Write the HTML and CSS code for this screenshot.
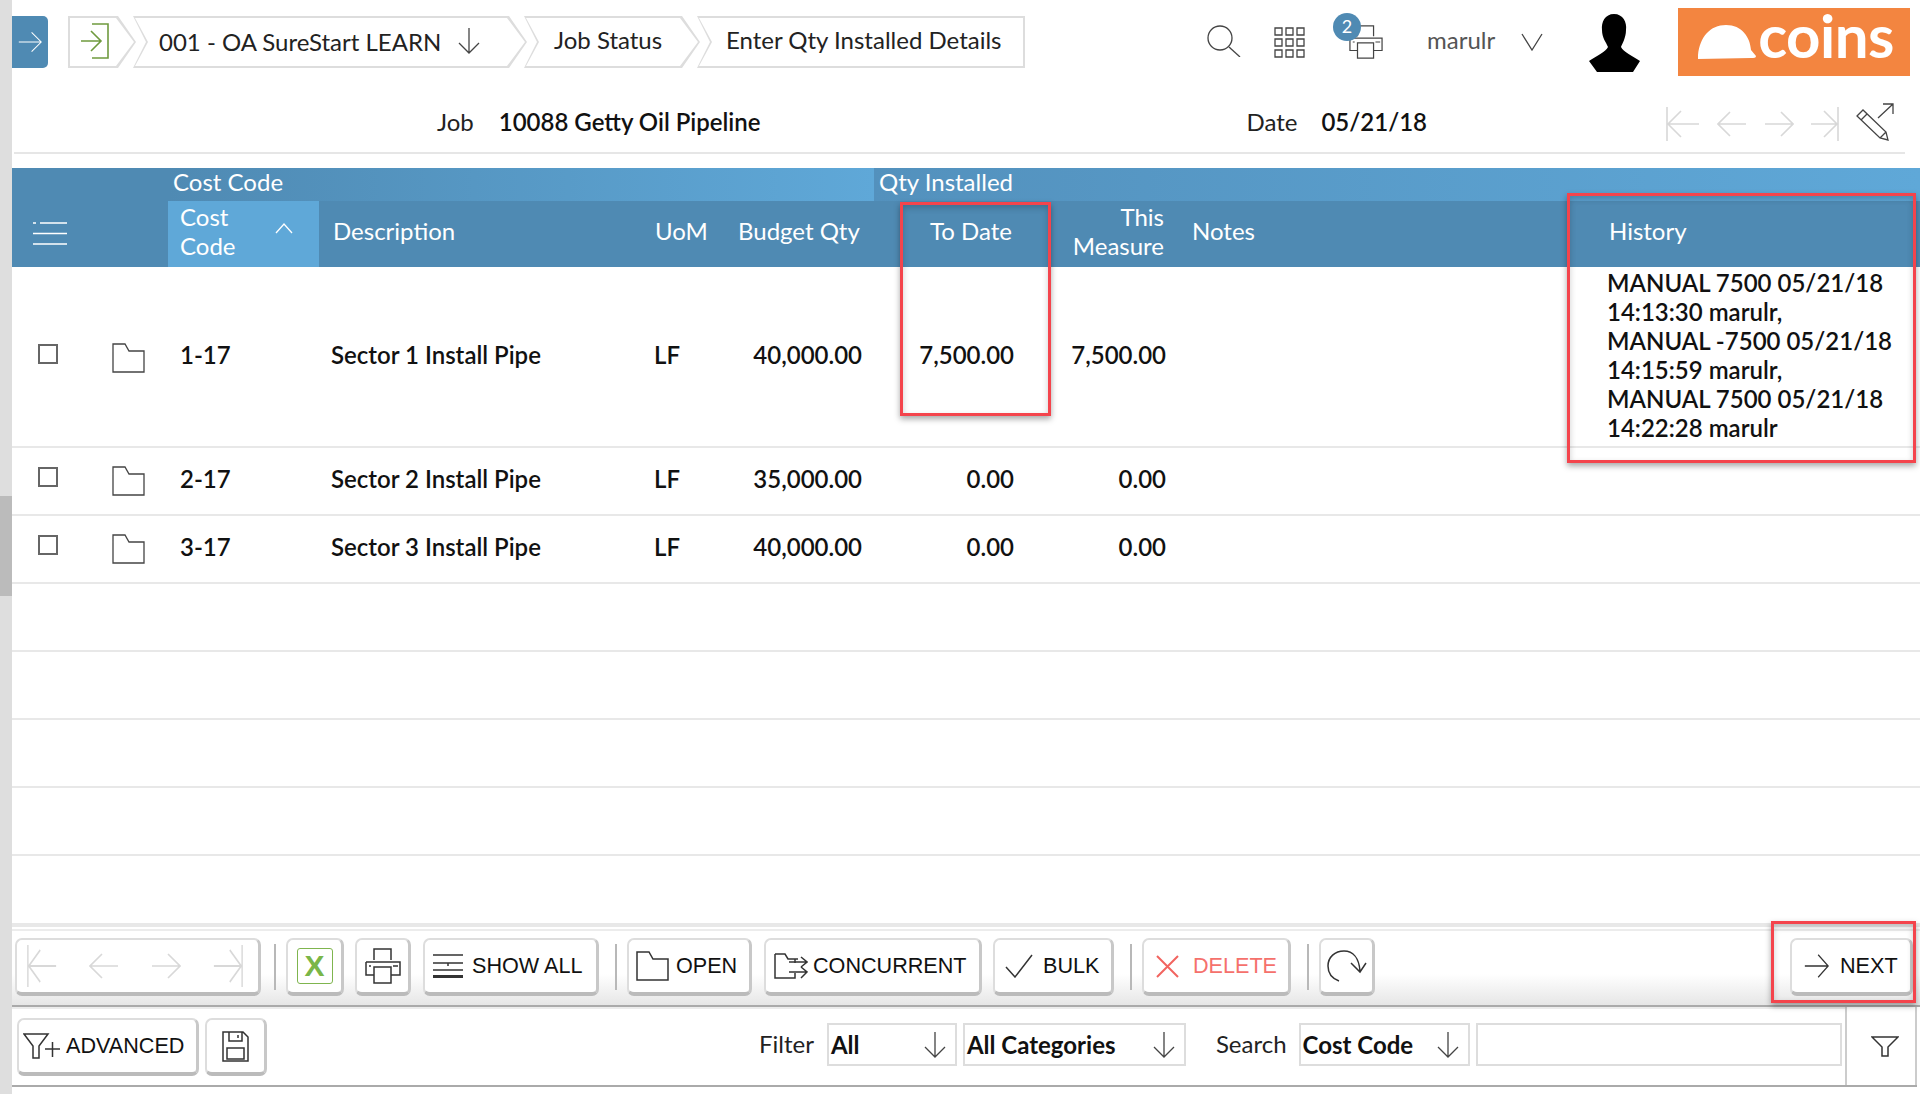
FILE: index.html
```html
<!DOCTYPE html>
<html lang="en">
  <head>
    <meta charset="UTF-8" />
    <title>Enter Qty Installed Details</title>
    <link rel="stylesheet" href="styles.css">
  </head>
  <body>
    <svg class="sprite" xmlns="http://www.w3.org/2000/svg">
      <symbol id="arrow-right" viewBox="0 0 30 30"><path d="M1 15H29M17 3L29 15L17 27" /></symbol>
      <symbol id="arrow-left" viewBox="0 0 30 30"><path d="M29 15H1M13 3L1 15L13 27" /></symbol>
      <symbol id="arrow-first" viewBox="0 0 34 34"><path d="M1 0V34M33 17H2M15 4L2 17L15 30" /></symbol>
      <symbol id="arrow-last" viewBox="0 0 34 34"><path d="M33 0V34M1 17H32M19 4L32 17L19 30" /></symbol>
      <symbol id="arrow-down" viewBox="0 0 24 26"><path d="M12 0V25M2 15L12 25L22 15" /></symbol>
      <symbol id="folder" viewBox="0 0 33 30"><path d="M1 1H13L17 8H32V29H1Z" /></symbol>
      <symbol id="printer" viewBox="0 0 36 36"><path d="M9 12V1H26V12M1 14H35V27H26M9 27H1V14M9 19H26V35H9Z" /><path d="M4 18H6M28 18H33" /></symbol>
    </svg>

    <div class="page">
      <div class="scrollbar"><div class="scroll-thumb"></div></div>

      <div class="main">
        <header class="topbar">
          <button class="nav-toggle" type="button">
            <svg class="icon white" width="24" height="30"><use href="#arrow-right" /></svg>
          </button>
          <nav class="crumbs">
            <div class="crumb crumb-home">
              <svg class="icon green" width="30" height="36" viewBox="0 0 30 36"><path d="M1 18H20M11 8L21 18L11 28M12 1H28V35H12" /></svg>
            </div>
            <div class="crumb crumb-company">
              <span class="crumb-low">001 - OA SureStart LEARN</span>
              <svg class="icon" width="24" height="26"><use href="#arrow-down" /></svg>
            </div>
            <div class="crumb crumb-status">Job Status</div>
            <div class="crumb crumb-last">Enter Qty Installed Details</div>
          </nav>

          <div class="top-tools">
            <svg class="icon tool-search" width="34" height="32" viewBox="0 0 34 32"><ellipse cx="13" cy="13" rx="12" ry="12" /><path d="M22 22L33 32" /></svg>
            <svg class="icon tool-grid" width="31" height="31" viewBox="0 0 31 31">
              <path d="M1 1h7v7h-7zM12 1h7v7h-7zM23 1h7v7h-7zM1 12h7v7h-7zM12 12h7v7h-7zM23 12h7v7h-7zM1 23h7v7h-7zM12 23h7v7h-7zM23 23h7v7h-7z" />
            </svg>
            <div class="tool-print">
              <svg class="icon" width="34" height="34"><use href="#printer" /></svg>
              <span class="badge">2</span>
            </div>
            <span class="username">marulr</span>
            <svg class="icon tool-caret" width="22" height="18" viewBox="0 0 22 18"><path d="M1 1L11 17L21 1" /></svg>
            <svg class="avatar" width="51" height="58" viewBox="0 0 51 58"><path d="M25 0C34 0 38 8 37 16C37 24 33 30 32 33C34 38 44 42 51 47L44 58H8L0 47C7 42 17 38 19 33C17 28 13 24 13 16C12 8 16 0 25 0Z" /></svg>
            <div class="logo">
              <svg width="60" height="34" viewBox="0 0 60 34"><path d="M2 30C4 12 14 0 30 0C46 0 54 12 55 25L60 31C60 33 58 33 55 33L2 34Z" fill="#fff" /></svg>
              <span class="logo-text">coins</span>
            </div>
          </div>
        </header>

        <section class="job-bar">
          <span class="job-label">Job</span>
          <strong class="job-value">10088 Getty Oil Pipeline</strong>
          <span class="date-label">Date</span>
          <strong class="date-value">05/21/18</strong>
          <div class="record-nav">
            <svg class="icon faint" width="34" height="34"><use href="#arrow-first" /></svg>
            <svg class="icon faint" width="30" height="30"><use href="#arrow-left" /></svg>
            <svg class="icon faint" width="30" height="30"><use href="#arrow-right" /></svg>
            <svg class="icon faint" width="28" height="34" viewBox="6 0 28 34"><use href="#arrow-last" width="34" height="34" /></svg>
            <svg class="icon edit-icon" width="38" height="38" viewBox="0 0 38 38"><path d="M1 13L7 7L30 29L32 37L24 35ZM5 17L11 11M24 35L30 29M22 15L37 1M27 1H37V11" /></svg>
          </div>
        </section>

        <div class="grid-wrap">
          <div class="band">
            <div class="band-code">Cost Code</div>
            <div class="band-qty">Qty Installed</div>
          </div>
          <div class="row head-row">
            <div class="cell">
              <svg class="icon white" width="34" height="24" viewBox="0 0 34 24"><path d="M0 1H3M7 1H34M0 11.500H34M0 22H34" /></svg>
            </div>
            <div class="cell head-code">
              <span>Cost<br />Code</span>
              <svg class="icon white sort-caret" width="18" height="11" viewBox="0 0 18 11"><path d="M1 10L9 1L17 10" /></svg>
            </div>
            <div class="cell col-desc">Description</div>
            <div class="cell col-uom">UoM</div>
            <div class="cell head-budget">Budget Qty</div>
            <div class="cell head-todate">To Date</div>
            <div class="cell head-measure">This<br />Measure</div>
            <div class="cell head-notes">Notes</div>
            <div class="cell head-history">History</div>
          </div>

          <div class="row data-row row-tall">
            <div class="cell cell-select">
              <input class="check" type="checkbox" />
              <svg class="icon folder-icon" width="33" height="30"><use href="#folder" /></svg>
            </div>
            <div class="cell col-code">1-17</div>
            <div class="cell col-desc">Sector 1 Install Pipe</div>
            <div class="cell col-uom">LF</div>
            <div class="cell num num-budget">40,000.00</div>
            <div class="cell num num-todate">7,500.00</div>
            <div class="cell num num-measure">7,500.00</div>
            <div class="cell"></div>
            <div class="cell col-history">
              MANUAL 7500 05/21/18<br />14:13:30 marulr,<br />
              MANUAL -7500 05/21/18<br />14:15:59 marulr,<br />
              MANUAL 7500 05/21/18<br />14:22:28 marulr
            </div>
          </div>
          <div class="row data-row">
            <div class="cell cell-select">
              <input class="check" type="checkbox" />
              <svg class="icon folder-icon" width="33" height="30"><use href="#folder" /></svg>
            </div>
            <div class="cell col-code">2-17</div>
            <div class="cell col-desc">Sector 2 Install Pipe</div>
            <div class="cell col-uom">LF</div>
            <div class="cell num num-budget">35,000.00</div>
            <div class="cell num num-todate">0.00</div>
            <div class="cell num num-measure">0.00</div>
            <div class="cell"></div>
            <div class="cell"></div>
          </div>
          <div class="row data-row">
            <div class="cell cell-select">
              <input class="check" type="checkbox" />
              <svg class="icon folder-icon" width="33" height="30"><use href="#folder" /></svg>
            </div>
            <div class="cell col-code">3-17</div>
            <div class="cell col-desc">Sector 3 Install Pipe</div>
            <div class="cell col-uom">LF</div>
            <div class="cell num num-budget">40,000.00</div>
            <div class="cell num num-todate">0.00</div>
            <div class="cell num num-measure">0.00</div>
            <div class="cell"></div>
            <div class="cell"></div>
          </div>
          <div class="empty-row"></div>
          <div class="empty-row"></div>
          <div class="empty-row"></div>
          <div class="empty-row"></div>
        </div>

        <footer class="footer">
          <div class="toolbar">
            <div class="btn btn-nav">
              <svg class="icon faint" width="30" height="42" viewBox="0 0 34 34" preserveAspectRatio="none"><use href="#arrow-first" /></svg>
              <svg class="icon faint" width="30" height="34"><use href="#arrow-left" /></svg>
              <svg class="icon faint" width="30" height="34"><use href="#arrow-right" /></svg>
              <svg class="icon faint" width="30" height="42" viewBox="0 0 34 34" preserveAspectRatio="none"><use href="#arrow-last" /></svg>
            </div>
            <span class="divider"></span>
            <div class="btn btn-excel">
              <span class="excel-box">X</span>
            </div>
            <div class="btn btn-print">
              <svg class="icon dark" width="36" height="36"><use href="#printer" /></svg>
            </div>
            <div class="btn btn-showall">
              <svg class="icon dark" width="30" height="24" viewBox="0 0 30 24"><path d="M0 1H30M0 9H30M15 9V12M0 16H30" /><path class="thick" d="M0 22.500H30" /></svg>
              SHOW ALL
            </div>
            <span class="divider"></span>
            <div class="btn btn-open">
              <svg class="icon dark" width="33" height="30"><use href="#folder" /></svg>
              OPEN
            </div>
            <div class="btn btn-concurrent">
              <svg class="icon dark" width="34" height="26" viewBox="0 0 34 26"><path d="M1 1H11L14 6H24M1 1V25H21V20M21 6V10M15 9H32M27 4L33 9L27 14M15 19H32M27 14L33 19L27 25" /></svg>
              CONCURRENT
            </div>
            <div class="btn btn-bulk">
              <svg class="icon dark" width="28" height="24" viewBox="0 0 28 24"><path d="M1 13L10 23L27 1" /></svg>
              BULK
            </div>
            <span class="divider"></span>
            <div class="btn btn-delete">
              <svg class="icon red" width="23" height="23" viewBox="0 0 23 23"><path d="M1 1L22 22M22 1L1 22" /></svg>
              DELETE
            </div>
            <span class="divider"></span>
            <div class="btn btn-refresh">
              <svg class="icon dark" width="40" height="32" viewBox="0 0 40 32"><path d="M12 31C4 28 1 22 1 16C1 7 8 1 17 1C26 1 32 8 33 21M24 13L33 22L39 13" /></svg>
            </div>
            <div class="btn btn-next">
              <svg class="icon dark" width="25" height="28" viewBox="0 0 30 30" preserveAspectRatio="none"><use href="#arrow-right" /></svg>
              NEXT
            </div>
          </div>

          <div class="filterbar">
            <div class="filter-main">
              <div class="btn btn-advanced">
                <svg class="icon dark" width="37" height="26" viewBox="0 0 37 26"><path d="M1 1H25L16 13V25H10V13ZM22 16H37M29.500 9V24" /></svg>
                ADVANCED
              </div>
              <div class="btn btn-save">
                <svg class="icon dark" width="27" height="31" viewBox="0 0 27 31"><path d="M1 1H21L26 6V30H1ZM7 1V10H20V1M16 4V7M5 17H22V28H5Z" /></svg>
              </div>
              <label class="filter-label label-filter">Filter</label>
              <div class="select select-all">All<svg class="icon" width="24" height="26"><use href="#arrow-down" /></svg></div>
              <div class="select select-cat">All Categories<svg class="icon" width="24" height="26"><use href="#arrow-down" /></svg></div>
              <label class="filter-label label-search">Search</label>
              <div class="select select-field">Cost Code<svg class="icon" width="24" height="26"><use href="#arrow-down" /></svg></div>
              <input class="search-input" type="text" />
            </div>
            <div class="filter-side">
              <svg class="icon dark" width="28" height="21" viewBox="0 0 28 21"><path d="M1 1H27L17 11V20H11V11Z" /></svg>
            </div>
          </div>
        </footer>
      </div>

      <!-- red annotation boxes over the screenshot -->
      <div class="mark mark-todate"></div>
      <div class="mark mark-history"></div>
      <div class="mark mark-next"></div>
    </div>
  </body>
</html>
```

FILE: styles.css
```css
* {
  box-sizing: border-box;
}
html,
body {
  margin: 0;
  height: 100%;
  background: #fff;
}
body {
  font-family: Lato, "Open Sans", sans-serif;
  font-size: 24px;
  color: #111;
  overflow: hidden;
}
.sprite {
  display: none;
}
.icon {
  flex: none;
  fill: none;
  stroke: #444;
  stroke-width: 1.3;
}
.icon.white {
  stroke: #fff;
}
.icon.green {
  stroke: #6f9a3e;
  stroke-width: 1.6;
}
.icon.faint {
  stroke: #d8d8d8;
  stroke-width: 1.6;
}
.icon.dark {
  stroke: #333;
  stroke-width: 1.5;
}
.icon.red {
  stroke: #f2645f;
  stroke-width: 2;
}
.icon .thick {
  stroke-width: 3;
}
.page {
  position: relative;
  display: flex;
  width: 1920px;
  height: 1094px;
}
.scrollbar {
  flex: none;
  width: 12px;
  background: #dedede;
  padding-top: 496px;
}
.scroll-thumb {
  height: 100px;
  background: #bbb;
}
.main {
  flex: 1;
  display: flex;
  flex-direction: column;
  min-width: 0;
}

/* top bar */
.topbar {
  display: flex;
  align-items: flex-start;
  height: 84px;
  flex: none;
}
.nav-toggle {
  width: 36px;
  height: 52px;
  margin-top: 16px;
  padding: 0;
  display: flex;
  align-items: center;
  justify-content: center;
  border: none;
  border-radius: 0 5px 5px 0;
  background: #4f8ab3;
}
.crumbs {
  display: flex;
  margin: 16px 0 0 20px;
}
.crumb {
  position: relative;
  display: flex;
  align-items: center;
  height: 52px;
  margin-right: -3px;
  background: #ddd;
  color: #222;
  padding-bottom: 6px;
  clip-path: polygon(0 0, calc(100% - 18px) 0, 100% 50%, calc(100% - 18px) 100%, 0 100%, 13px 50%);
}
.crumb::before {
  content: "";
  position: absolute;
  inset: 2px 2px 2px 2px;
  background: #fff;
  clip-path: polygon(0 0, calc(100% - 18px) 0, 100% 50%, calc(100% - 18px) 100%, 0 100%, 13px 50%);
}
.crumb > * {
  position: relative;
}
.crumb-home {
  width: 68px;
  padding-left: 12px;
  clip-path: polygon(0 0, calc(100% - 18px) 0, 100% 50%, calc(100% - 18px) 100%, 0 100%);
}
.crumb-home::before {
  clip-path: polygon(0 0, calc(100% - 18px) 0, 100% 50%, calc(100% - 18px) 100%, 0 100%);
}
.crumb-home .icon {
  top: 2px;
}
.crumb-company {
  width: 394px;
  padding-left: 26px;
  gap: 16px;
}
.crumb-company .icon {
  top: 2px;
}
.crumb-low {
  top: 2px;
}
.crumb-status {
  width: 176px;
  padding-left: 30px;
  isolation: isolate;
}
.crumb-last {
  width: 328px;
  padding-left: 29px;
  isolation: isolate;
  clip-path: polygon(0 0, 100% 0, 100% 100%, 0 100%, 13px 50%);
}
.crumb-last::before {
  clip-path: polygon(0 0, 100% 0, 100% 100%, 0 100%, 13px 50%);
}
.crumb-status::before,
.crumb-last::before {
  z-index: -1;
}
.top-tools {
  flex: 1;
  display: flex;
  align-items: flex-start;
  position: relative;
  padding-left: 185px;
}
.tool-search {
  margin-top: 25px;
}
.tool-grid {
  margin: 27px 0 0 33px;
}
.tool-print {
  position: relative;
  margin: 25px 0 0 44px;
  height: 34px;
}
.badge {
  position: absolute;
  left: -16px;
  top: -12px;
  width: 28px;
  height: 28px;
  border-radius: 50%;
  background: #4f8ab3;
  color: #fff;
  font-size: 18px;
  line-height: 27px;
  text-align: center;
}
.username {
  margin: 24px 0 0 44px;
  color: #555;
  line-height: 32px;
}
.tool-caret {
  margin: 33px 0 0 26px;
}
.avatar {
  flex: none;
  margin: 14px 0 0 46px;
  fill: #000;
}
.logo {
  display: flex;
  align-items: center;
  flex: none;
  width: 232px;
  height: 68px;
  margin: 8px 0 0 38px;
  padding-left: 18px;
  background: #f38540;
}
.logo-text {
  margin: -14px 0 0 2px;
  color: #fff;
  font-size: 60px;
  font-weight: 700;
  line-height: 60px;
  letter-spacing: -0.5px;
}

/* job header */
.job-bar {
  flex: none;
  display: flex;
  align-items: center;
  height: 70px;
  margin: 0 15px 14px 2px;
  padding: 6px 11px 0 423px;
  border-bottom: 2px solid #e6e6e6;
}
.job-label,
.date-label {
  color: #222;
}
.job-value {
  margin-left: 25px;
  font-weight: 600;
}
.date-label {
  margin-left: 486px;
}
.date-value {
  margin-left: 24px;
  font-weight: 600;
}
.record-nav {
  display: flex;
  align-items: center;
  margin: 5px 0 0 auto;
  gap: 17px;
}
.edit-icon {
  margin-top: -3px;
}

/* grid */
.grid-wrap {
  flex: 1;
  min-height: 0;
  overflow: hidden;
  color: #111;
}
.band {
  display: flex;
  height: 33px;
  padding-left: 156px;
  background: #4f8ab3;
  color: #fff;
  line-height: 28px;
}
.band-code {
  width: 706px;
  padding-left: 5px;
  background: linear-gradient(to right, #4f8ab3, #5fa8d8);
}
.band-qty {
  flex: 1;
  padding-left: 5px;
  background: linear-gradient(to right, #5391bd, #5fa8d8);
}
.row {
  display: grid;
  grid-template-columns: 156px 151px 321px 90px 140px 152px 154px 424px 320px;
}
.cell {
  display: flex;
  align-items: center;
}
.head-row {
  height: 66px;
  background: #4f8ab3;
  color: #fff;
  line-height: 29px;
}
.head-row .cell {
  padding-bottom: 7px;
}
.head-row .cell:first-child {
  padding: 0 0 0 21px;
}
.head-code {
  justify-content: space-between;
  padding: 0 26px 0 12px;
  background: #5fa8d8;
}
.sort-caret {
  margin-bottom: 4px;
}
.head-row .col-desc {
  padding-left: 14px;
}
.head-row .col-uom {
  padding-left: 15px;
}
.head-budget {
  padding-left: 8px;
}
.head-todate {
  padding-left: 60px;
}
.head-measure {
  justify-content: flex-end;
  padding-right: 12px;
  text-align: right;
}
.head-notes {
  padding-left: 16px;
}
.head-history {
  padding-left: 9px;
}
.data-row {
  height: 68px;
  padding-bottom: 6px;
  border-bottom: 2px solid #e8e8e8;
  font-weight: 600;
  line-height: 29px;
}
.row-tall {
  height: 181px;
}
.cell-select {
  padding-left: 26px;
}
.check {
  appearance: none;
  width: 20px;
  height: 20px;
  margin: 0 0 2px;
  border: 2px solid #666;
  background: #fff;
  flex: none;
}
.folder-icon {
  margin: 6px 0 0 54px;
}
.col-code {
  padding-left: 12px;
}
.col-desc {
  padding-left: 12px;
}
.col-uom {
  padding-left: 14px;
}
.num {
  justify-content: flex-end;
}
.num-budget,
.num-todate {
  padding-right: 8px;
}
.num-measure {
  padding-right: 10px;
}
.col-history {
  display: block;
  padding: 1px 0 0 7px;
  white-space: nowrap;
}
.empty-row {
  height: 68px;
  border-bottom: 2px solid #e8e8e8;
}

/* bottom bars */
.footer {
  flex: none;
  padding-bottom: 7px;
  border-top: 4px solid #e8e8e8;
  font-family: "Liberation Sans", Arial, sans-serif;
  font-size: 21.600px;
}
.toolbar {
  display: flex;
  align-items: center;
  height: 78px;
  margin-top: 2px;
  padding: 1px 7px 3px 3px;
  border-top: 2px solid #ececec;
  border-bottom: 2px solid #aaa;
  background: linear-gradient(to bottom, #fff 58%, #e6e6e6 100%);
}
.btn {
  display: flex;
  align-items: center;
  flex: none;
  height: 58px;
  margin-right: 12px;
  border: 2px solid #ddd;
  border-right: 3px solid #c8c8c8;
  border-bottom: 4px solid #bbb;
  border-radius: 7px;
  background: #fff;
  color: #111;
}
.divider {
  flex: none;
  width: 2px;
  height: 46px;
  margin: 0 10px 0 4px;
  background: #b8b8b8;
}
.btn-nav {
  width: 246px;
  gap: 32px;
  padding-left: 10px;
  margin-right: 9px;
}
.btn-excel {
  width: 58px;
  justify-content: center;
  margin-right: 11px;
}
.excel-box {
  display: flex;
  align-items: center;
  justify-content: center;
  width: 36px;
  height: 36px;
  border: 1.500px solid #7fb54e;
  border-radius: 3px;
  color: #7ab648;
  font-size: 30px;
  font-weight: 700;
}
.btn-print {
  width: 56px;
  justify-content: center;
}
.btn-showall {
  width: 176px;
  gap: 9px;
  padding-left: 8px;
}
.btn-open {
  width: 125px;
  gap: 7px;
  padding-left: 7px;
}
.btn-concurrent {
  width: 218px;
  gap: 5px;
  padding-left: 8px;
  margin-right: 11px;
}
.btn-bulk {
  width: 121px;
  gap: 10px;
  padding-left: 10px;
}
.btn-delete {
  width: 149px;
  gap: 14px;
  padding-left: 12px;
  color: #f5716c;
}
.btn-refresh {
  width: 56px;
  justify-content: center;
  margin-right: 0;
}
.btn-next {
  width: 123px;
  gap: 11px;
  padding-left: 12px;
  margin: 0 0 0 auto;
}
.filterbar {
  display: flex;
  height: 80px;
  border-bottom: 2px solid #aaa;
  margin-right: 3px;
}
.filter-main {
  flex: 1;
  display: flex;
  align-items: center;
  padding: 3px 3px 3px 5px;
  border-top: 2px solid #ececec;
}
.filter-side {
  flex: none;
  width: 72px;
  display: flex;
  align-items: center;
  justify-content: center;
  padding-left: 8px;
  border-left: 2px solid #ccc;
  border-right: 2px solid #ccc;
}
.btn-advanced {
  width: 182px;
  gap: 6px;
  padding-left: 4px;
  margin-right: 6px;
}
.btn-save {
  width: 62px;
  justify-content: center;
  margin-right: 0;
}
.filter-label {
  font-family: Lato, sans-serif;
  font-size: 24px;
  color: #222;
}
.label-filter {
  margin: 0 13px 8px 492px;
}
.label-search {
  margin: 0 12px 8px 30px;
}
.select {
  display: flex;
  align-items: center;
  justify-content: space-between;
  flex: none;
  height: 43px;
  margin-bottom: 5px;
  padding: 0 8px 0 2px;
  border: 2px solid #ddd;
  font-family: Lato, sans-serif;
  font-size: 24px;
  font-weight: 700;
  color: #111;
}
.select-all {
  width: 130px;
  margin-right: 6px;
}
.select-cat {
  width: 223px;
}
.select-field {
  width: 171px;
  margin-right: 6px;
}
.search-input {
  flex: none;
  width: 366px;
  height: 43px;
  margin-bottom: 5px;
  border: 2px solid #ddd;
  padding: 0 4px;
}

/* annotation boxes */
.mark {
  position: absolute;
  border: 3px solid #f4444c;
  box-shadow: 0 3px 6px rgba(0, 0, 0, 0.35), inset 0 3px 6px rgba(0, 0, 0, 0.2);
}
.mark-todate {
  left: 900px;
  top: 202px;
  width: 151px;
  height: 214px;
}
.mark-history {
  left: 1567px;
  top: 193px;
  width: 349px;
  height: 270px;
}
.mark-next {
  left: 1771px;
  top: 921px;
  width: 145px;
  height: 82px;
}
```
